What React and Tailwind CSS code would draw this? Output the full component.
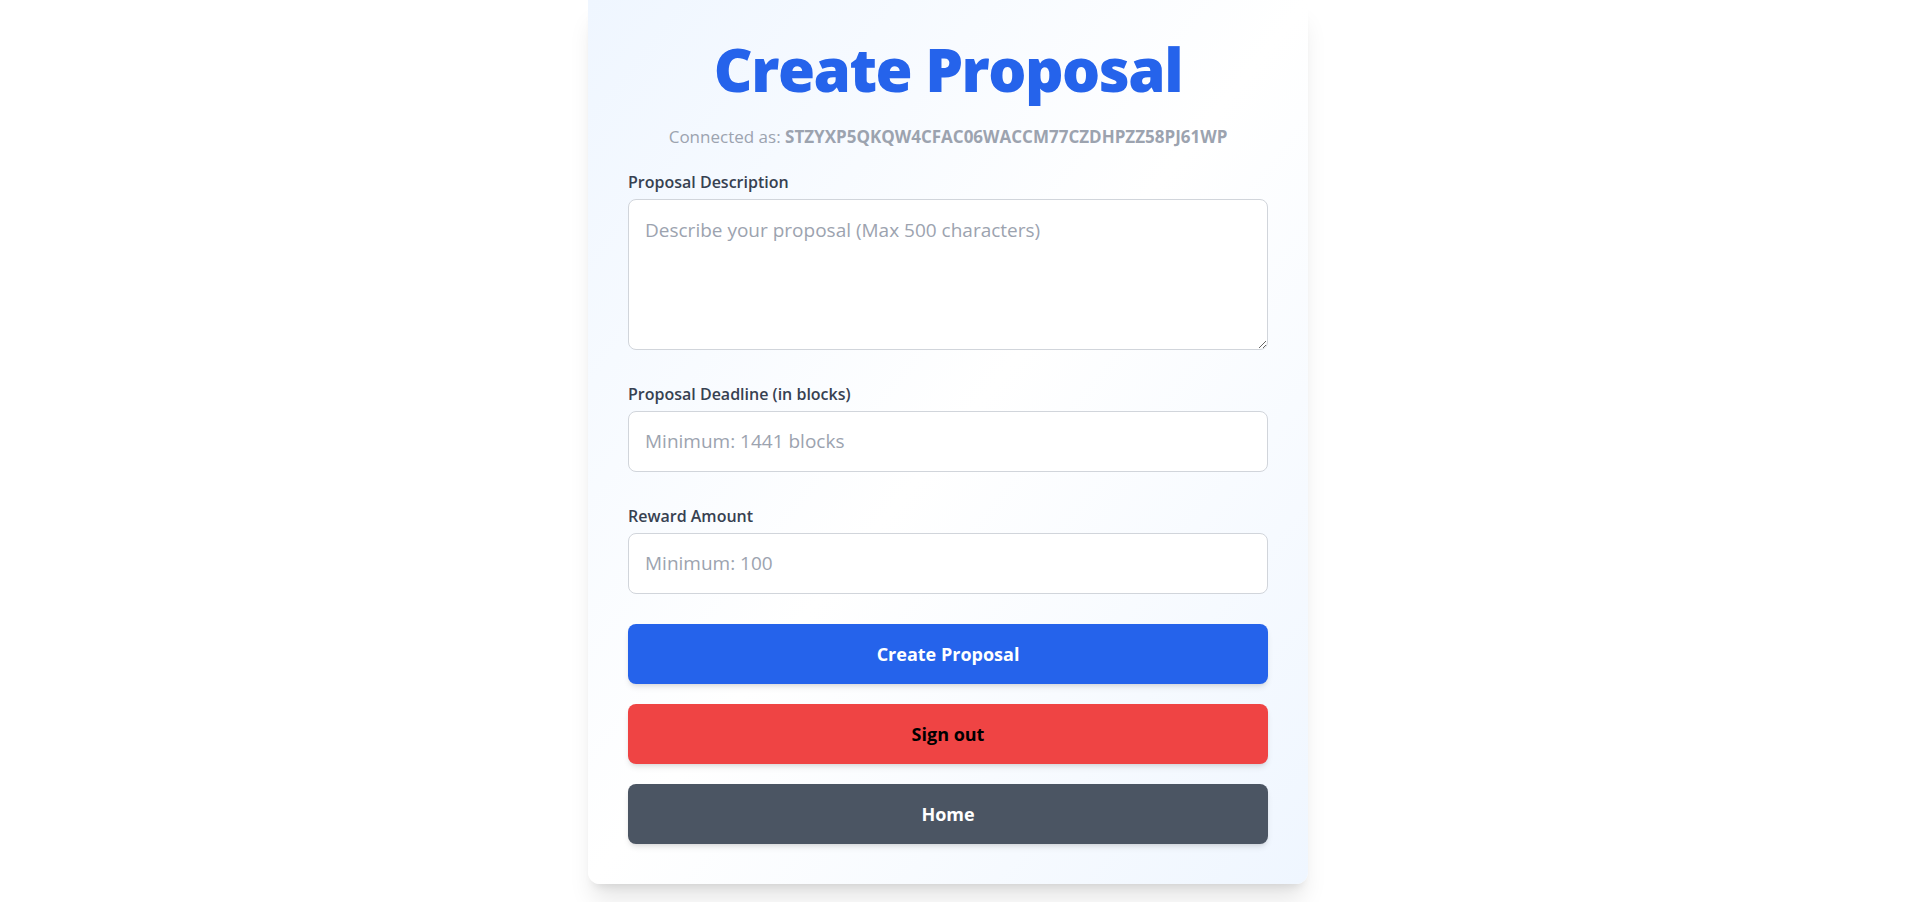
import React, { useState } from 'react'

export default function App() {
  const [description, setDescription] = useState('')
  const [deadline, setDeadline] = useState('')
  const [reward, setReward] = useState('')

  return (
    <div className="min-h-screen bg-white flex justify-center pr-[11px] font-['Open_Sans',sans-serif]">
      <div className="w-[720px] self-start bg-gradient-to-br from-[#eff6ff] via-white to-[#eff6ff] rounded-b-xl shadow-xl px-10 pt-[39px] pb-10">
        <h1 className="text-[60px] leading-none font-extrabold tracking-tight text-[#2563eb] text-center">
          Create Proposal
        </h1>
        <p className="mt-[25px] text-[17px] text-[#9ca3af] text-center">
          Connected as: <span className="font-bold">STZYXP5QKQW4CFAC06WACCM77CZDHPZZ58PJ61WP</span>
        </p>

        {/* form */}
        <div className="mt-5">
          <label className="block text-base font-semibold text-[#374151] mb-[5px]">Proposal Description</label>
          <textarea
            value={description}
            onChange={e => setDescription(e.target.value)}
            placeholder="Describe your proposal (Max 500 characters)"
            className="block w-full h-[151px] p-4 text-[19px] leading-7 bg-white border border-[#d1d5db] rounded-lg placeholder-[#9ca3af] focus:outline-none"
          />
        </div>

        <div className="mt-8">
          <label className="block text-base font-semibold text-[#374151] mb-[5px]">Proposal Deadline (in blocks)</label>
          <input
            type="number"
            value={deadline}
            onChange={e => setDeadline(e.target.value)}
            placeholder="Minimum: 1441 blocks"
            className="block w-full h-[61px] px-4 text-[19px] bg-white border border-[#d1d5db] rounded-lg placeholder-[#9ca3af] focus:outline-none"
          />
        </div>

        <div className="mt-8">
          <label className="block text-base font-semibold text-[#374151] mb-[5px]">Reward Amount</label>
          <input
            type="number"
            value={reward}
            onChange={e => setReward(e.target.value)}
            placeholder="Minimum: 100"
            className="block w-full h-[61px] px-4 text-[19px] bg-white border border-[#d1d5db] rounded-lg placeholder-[#9ca3af] focus:outline-none"
          />
        </div>

        <div className="mt-[30px] flex flex-col gap-5">
          <button className="h-[60px] w-full rounded-lg bg-[#2563eb] text-white text-lg font-bold shadow-md">
            Create Proposal
          </button>
          <button className="h-[60px] w-full rounded-lg bg-[#ef4444] text-black text-lg font-bold shadow-md">
            Sign out
          </button>
          <button className="h-[60px] w-full rounded-lg bg-[#4b5563] text-white text-lg font-bold shadow-md">
            Home
          </button>
        </div>
      </div>
    </div>
  )
}
